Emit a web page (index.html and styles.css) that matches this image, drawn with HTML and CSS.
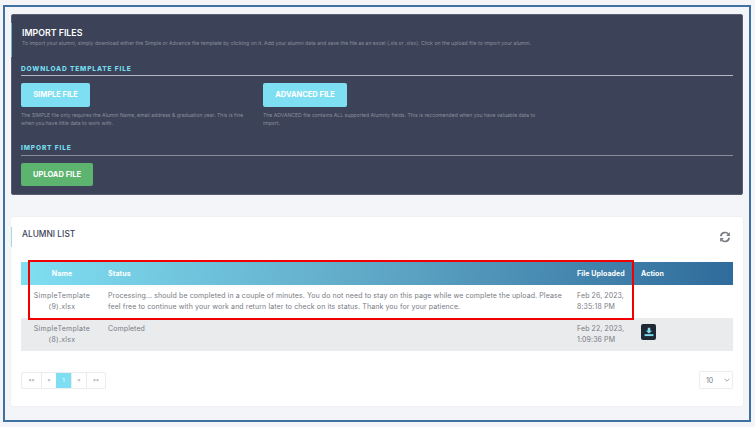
FILE: index.html
```html
<!DOCTYPE html>
<html lang="en">
<head>
<meta charset="utf-8">
<title>Import Files</title>
<link rel="stylesheet" href="styles.css">
</head>
<body>
<div class="frame">
  <section class="card dark">
    <div class="head">
      <h1>IMPORT FILES</h1>
      <p class="sub">To import your alumni, simply download either the Simple or Advance file template by clicking on it. Add your alumni data and save the file as an excel (.xls or .xlsx). Click on the upload file to import your alumni.</p>
    </div>
    <h2 class="section">DOWNLOAD TEMPLATE FILE</h2>
    <div class="templates">
      <div class="tpl">
        <a class="btn cyan simple">SIMPLE FILE</a>
        <p class="note">The SIMPLE file only requires the Alumni Name, email address &amp; graduation year. This is fine when you have little data to work with.</p>
      </div>
      <div class="tpl">
        <a class="btn cyan advanced">ADVANCED FILE</a>
        <p class="note">The ADVANCED file contains ALL supported Alumnly fields. This is reccomended when you have valuable data to import.</p>
      </div>
    </div>
    <h2 class="section second">IMPORT FILE</h2>
    <a class="btn green">UPLOAD FILE</a>
  </section>

  <section class="card light">
    <div class="list-head">
      <h1>ALUMNI LIST</h1>
      <svg class="refresh" viewBox="0 0 24 24" width="12" height="12" aria-hidden="true">
        <path d="M3.5 10.5A8.7 8.7 0 0 1 19 6.5" fill="none" stroke="#7b7f85" stroke-width="3.4"/>
        <path d="M21.8 2.2v7.6h-7.6z" fill="#7b7f85"/>
        <path d="M20.5 13.5A8.7 8.7 0 0 1 5 17.5" fill="none" stroke="#7b7f85" stroke-width="3.4"/>
        <path d="M2.2 21.8v-7.6h7.6z" fill="#7b7f85"/>
      </svg>
    </div>
    <div class="table">
      <div class="row header">
        <div class="c name">Name</div>
        <div class="c status">Status</div>
        <div class="c date">File Uploaded</div>
        <div class="c action">Action</div>
      </div>
      <div class="row">
        <div class="c name">SimpleTemplate (9).xlsx</div>
        <div class="c status">Processing... should be completed in a couple of minutes. You do not need to stay on this page while we complete the upload. Please feel free to continue with your work and return later to check on its status. Thank you for your patience.</div>
        <div class="c date">Feb 26, 2023, 8:35:18 PM</div>
        <div class="c action"></div>
      </div>
      <div class="row alt">
        <div class="c name">SimpleTemplate (8).xlsx</div>
        <div class="c status">Completed</div>
        <div class="c date">Feb 22, 2023, 1:09:36 PM</div>
        <div class="c action">
          <span class="dl">
            <svg viewBox="0 0 16 16" width="10" height="10" aria-hidden="true">
              <path d="M6 1h4v5h3L8 10.500 3 6h3z" fill="#7fdff0"/>
              <rect x="1" y="11.500" width="14" height="3" fill="#7fdff0"/>
            </svg>
          </span>
        </div>
      </div>
    </div>
    <div class="foot">
      <div class="pager">
        <span class="pg wide">««</span>
        <span class="pg">«</span>
        <span class="pg on">1</span>
        <span class="pg">»</span>
        <span class="pg wide">»»</span>
      </div>
      <div class="size">
        <span>10</span>
        <svg viewBox="0 0 10 6" width="6" height="4" aria-hidden="true"><path d="M1 1l4 4 4-4" fill="none" stroke="#8a8d92" stroke-width="1.300"/></svg>
      </div>
    </div>
  </section>

  <div class="highlight"></div>
</div>
</body>
</html>
```

FILE: styles.css
```css
* { box-sizing: border-box; }
html, body { margin: 0; height: 100%; }
body {
  background: #f3f5f9;
  font-family: "Inter", "Liberation Sans", sans-serif;
  width: 755px;
  height: 427px;
  overflow: hidden;
  padding: 5px 4px 5px 3px;
}
.frame {
  position: relative;
  height: 417px;
  border: 2px solid #3f71a3;
  padding: 7px 6px 0 6px;
  background: #f3f5f9;
}
h1, h2, p { margin: 0; }
.card { border-radius: 2px; }
.dark {
  height: 181px;
  background: #3c4257;
  border: 1px solid #5b6070;
  padding: 0 9px;
}
.head {
  padding: 8px 0 0 10px;
  margin-left: -10px;
  height: 34px;
  border-left: 1px solid #6fb6c4;
  margin-top: 8px;
}
.head h1 {
  font-size: 8.800px;
  line-height: 11px;
  font-weight: 600;
  color: #fff;
  margin-top: -4px;
}
.sub {
  font-size: 5.150px;
  line-height: 9px;
  color: #8b8f9d;
  white-space: nowrap;
  margin-top: 1px;
}
.section {
  font-size: 6.600px;
  line-height: 11px;
  font-weight: 800;
  letter-spacing: 0.85px;
  color: #75dcef;
  border-bottom: 1px solid #b4b7c2;
  margin-top: 7px;
  height: 12px;
}
.second {
  margin-top: 16px;
  border-bottom-color: #888c98;
  height: 13px;
}
.templates { display: flex; margin-top: 7px; }
.tpl { width: 242px; }
.tpl + .tpl { width: 275px; }
.tpl .note { width: 225px; }
.tpl + .tpl .note { width: 275px; }
.btn {
  display: block;
  height: 24px;
  line-height: 24px;
  text-align: center;
  font-size: 7.500px;
  font-weight: 700;
  color: #fff;
  border-radius: 2px;
}
.cyan { background: #7fdff2; }
.simple { width: 69px; }
.advanced { width: 84px; }
.green { background: #5cb46f; width: 72px; margin-top: 7px; height: 23px; line-height: 23px; }
.note {
  font-size: 5.100px;
  line-height: 7.500px;
  color: #8b8f9d;
  margin-top: 5px;
}
.light {
  position: relative;
  height: 189px;
  margin-top: 22px;
  background: #fff;
  box-shadow: 0 0 2px rgba(60, 66, 87, 0.08);
  padding: 10px 10px 0;
}
.list-head {
  display: flex;
  justify-content: space-between;
  align-items: center;
  height: 20px;
  margin-left: -10px;
  padding-left: 10px;
  border-left: 1px solid #a9dcd8;
}
.list-head h1 {
  font-size: 8.400px;
  font-weight: 500;
  color: #3c4257;
  margin-bottom: 6px;
}
.refresh { margin: 0 2px 0 0; }
.table { margin-top: 15px; font-size: 7px; letter-spacing: 0.1px; color: #787b84; }
.row {
  display: grid;
  grid-template-columns: 82px 469px 64px 97px;
  height: 33px;
}
.header {
  height: 23px;
  background: linear-gradient(95deg, #80dff2 0%, #5fa7c6 50%, #2f6b9b 100%);
  color: #fff;
  font-weight: 700;
  line-height: 23px;
}
.alt { background: #eaebed; }
.c { padding: 0 5px; }
.row:not(.header) .c { padding-top: 6px; line-height: 10.500px; }
.name { text-align: center; }
.row:not(.header) .name { letter-spacing: 0.3px; }
.dl {
  display: flex;
  align-items: center;
  justify-content: center;
  width: 15px;
  height: 16px;
  border-radius: 2px;
  background: #1f2933;
}
.foot {
  display: flex;
  justify-content: space-between;
  align-items: center;
  margin-top: 20px;
}
.pager {
  display: flex;
  height: 17px;
  border: 1px solid #ececee;
  border-radius: 2px;
  font-size: 5px;
  color: #8a8d92;
}
.pg {
  width: 15px;
  display: flex;
  align-items: center;
  justify-content: center;
  border-left: 1px solid #ececee;
}
.pg:first-child { border-left: 0; }
.wide { width: 19px; }
.on { background: #7fdff2; color: #fff; border-left: 0; }
.size {
  display: flex;
  justify-content: space-between;
  align-items: center;
  width: 34px;
  height: 18px;
  padding: 0 2px 0 6px;
  border: 1px solid #ececee;
  border-radius: 2px;
  font-size: 7px;
  color: #787b84;
}
.highlight {
  position: absolute;
  left: 23px;
  top: 253px;
  width: 606px;
  height: 60px;
  border: 2px solid #f00000;
}
```
